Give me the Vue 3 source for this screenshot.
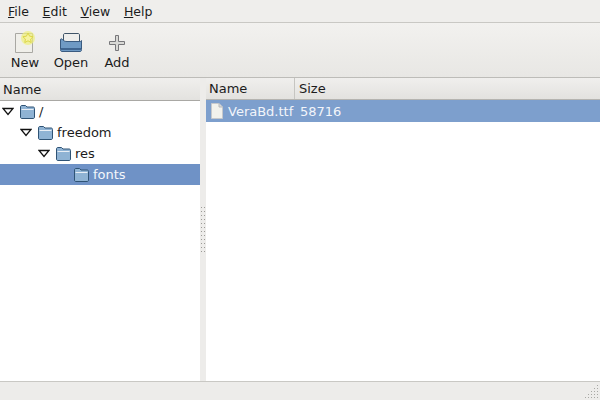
<script setup>
const tree = [
  { label: '/', depth: 0, open: true },
  { label: 'freedom', depth: 1, open: true },
  { label: 'res', depth: 2, open: true },
  { label: 'fonts', depth: 3, open: false, selected: true },
]
const menus = [
  { key: 'F', rest: 'ile' },
  { key: 'E', rest: 'dit' },
  { key: 'V', rest: 'iew' },
  { key: 'H', rest: 'elp' },
]
const gripDots = []
for (let row = 0; row < 5; row++) {
  for (let col = 0; col <= row; col++) {
    gripDots.push({ x: 14 - col * 3, y: 2 + row * 3 })
  }
}
</script>

<template>
  <div class="window">
    <nav class="menubar">
      <span v-for="m in menus" :key="m.key" class="menu"><u>{{ m.key }}</u>{{ m.rest }}</span>
    </nav>
    <div class="toolbar">
      <div class="tool tool-new">
        <svg width="26" height="24" viewBox="0 0 26 24">
          <path d="M3.500 3.500H20.500V22.500H3.500Z" fill="#f0efea" stroke="#a9a8a3" />
          <circle cx="16" cy="8" r="7" fill="#eef07a" opacity=".7" />
          <path d="M16 3l1.600 3.200 3.500.5-2.500 2.400.6 3.400-3.200-1.700-3.200 1.700.6-3.400-2.500-2.400 3.500-.5z" fill="#f6f3a0" stroke="#dcd648" stroke-width="1" />
        </svg>
        <span>New</span>
      </div>
      <div class="tool tool-open">
        <svg width="26" height="24" viewBox="0 0 26 24">
          <path d="M5.500 12V5C5.500 4 6 3.500 7 3.500H20C21 3.500 21.500 4 21.500 5V12Z" fill="#eeeeec" stroke="#3f5468" />
          <path d="M2.500 10C2.500 8.500 3.500 8.500 4.500 9.500C6 11 7 11.500 9 11.500H22C23 11.500 23.500 11 23.500 10.500V19.500C23.500 21 23 21.500 22 21.500H4C3 21.500 2.500 21 2.500 19.500Z" fill="#6f9ac4" stroke="#3a5b80" />
          <path d="M3 19H23" stroke="#3f6590" stroke-width="2" />
        </svg>
        <span>Open</span>
      </div>
      <div class="tool tool-add">
        <svg width="26" height="24" viewBox="0 0 26 24">
          <path d="M11.500 5.500H14.500V11.500H20.500V14.500H14.500V20.500H11.500V14.500H5.500V11.500H11.500Z" fill="#d9d9d6" stroke="#77777a" />
        </svg>
        <span>Add</span>
      </div>
    </div>
    <div class="panes">
      <aside class="tree">
        <div class="heading tree-heading">Name</div>
        <div
          v-for="n in tree"
          :key="n.label"
          class="tree-row"
          :class="{ selected: n.selected }"
          :style="{ paddingLeft: 2 + n.depth * 18 + 'px' }"
        >
          <svg class="arrow" width="12" height="12" viewBox="0 0 12 12">
            <path v-if="n.open" d="M1 2.500H11L6 8.500Z" fill="#fff" stroke="#111" stroke-width="1.300" />
          </svg>
          <svg class="folder" width="17" height="16" viewBox="0 0 17 16">
            <path d="M1.500 13V3C1.500 2 2 1.500 3 1.500H6.500L8 3H14C15 3 15.500 3.500 15.500 4.500V13C15.500 14 15 14.500 14 14.500H3C2 14.500 1.500 14 1.500 13Z" fill="#8fb3d4" stroke="#2f5375" />
            <path d="M2.500 5.500H14.500" stroke="#e8eef5" />
          </svg>
          <span class="tree-label">{{ n.label }}</span>
        </div>
      </aside>
      <div class="grip"><i v-for="i in 12" :key="i"></i></div>
      <main class="list">
        <div class="list-head">
          <div class="heading col-name">Name</div>
          <div class="heading col-size">Size</div>
        </div>
        <div class="file-row">
          <div class="col-name file-name">
            <svg width="16" height="18" viewBox="0 0 16 18">
              <path d="M2.500 1.500H10L13.500 5V16.500H2.500Z" fill="#f1f1ec" stroke="#c5c8cc" />
              <path d="M10 1.500V5H13.500" fill="#d8d8d4" stroke="#b5b8bc" />
            </svg>
            <span>VeraBd.ttf</span>
          </div>
          <div class="col-size">58716</div>
        </div>
      </main>
    </div>
    <footer class="statusbar">
      <svg class="resize" width="17" height="17" viewBox="0 0 17 17">
        <rect v-for="d in gripDots" :key="d.x + '-' + d.y" :x="d.x" :y="d.y" width="1" height="1" fill="#a8a8a4" />
      </svg>
    </footer>
  </div>
</template>

<style scoped>
.window {
  width: 600px;
  height: 400px;
  display: flex;
  flex-direction: column;
  overflow: hidden;
  background: #edecea;
  color: #1c1c1c;
  font-family: "DejaVu Sans", sans-serif;
  font-size: 13px;
}
.menubar {
  height: 22px;
  display: flex;
  align-items: center;
  gap: 13.7px;
  padding: 0 8px;
  background: #efeeec;
  border-bottom: 1px solid #c9c8c4;
  flex: none;
  box-sizing: content-box;
  font-size: 12.5px;
}
.menu u { text-underline-offset: 1px; }
.toolbar {
  height: 55px;
  flex: none;
  display: flex;
  padding: 7px 2px 0 2px;
  box-sizing: border-box;
  background: linear-gradient(#f2f1ef, #e8e7e4);
  border-bottom: 1px solid #bdbcb8;
}
.tool {
  display: flex;
  flex-direction: column;
  align-items: center;
  width: 46px;
  gap: 1px;
}
.panes {
  flex: 1;
  display: flex;
  min-height: 0;
}
.tree {
  width: 200px;
  flex: none;
  background: #fff;
}
.heading {
  height: 22px;
  display: flex;
  align-items: center;
  padding-left: 3px;
  box-sizing: border-box;
  background: linear-gradient(#f0efed, #e3e2df);
  border-bottom: 1px solid #b5b4b0;
}
.tree-heading {
  height: 23px;
  border-bottom-color: #a9a8a4;
}
.tree-row {
  height: 21px;
  display: flex;
  align-items: center;
  box-sizing: border-box;
}
.arrow { flex: none; margin-right: 5px; }
.folder { flex: none; margin-right: 3px; }
.tree-row.selected {
  background: #6f92c6;
  color: #f4f7fb;
}
.grip {
  width: 6px;
  flex: none;
  box-sizing: border-box;
  padding-left: 1px;
  display: flex;
  flex-direction: column;
  justify-content: center;
  align-items: flex-start;
  gap: 3px;
  background: #edecea;
}
.grip i {
  width: 2px;
  height: 1px;
  border-left: 1px solid #9c9b97;
  border-right: 1px solid #9c9b97;
}
.list {
  flex: 1;
  background: #fff;
}
.list-head { display: flex; }
.col-name { width: 89px; box-sizing: border-box; flex: none; }
.col-size { flex: 1; }
.list-head .col-name { box-shadow: inset -1px 0 0 #c6c5c1; }
.list-head .col-size { padding-left: 4px; }
.file-row {
  height: 22px;
  display: flex;
  align-items: center;
  background: #7d9fcd;
  color: #f2f5fa;
}
.file-name {
  display: flex;
  align-items: center;
  gap: 3px;
  padding-left: 3px;
  overflow: hidden;
  white-space: nowrap;
}
.file-row .col-size { padding-left: 5px; }
.statusbar {
  height: 19px;
  flex: none;
  box-sizing: border-box;
  display: flex;
  justify-content: flex-end;
  align-items: flex-end;
  background: #edecea;
  border-top: 1px solid #c9c8c4;
}
</style>
